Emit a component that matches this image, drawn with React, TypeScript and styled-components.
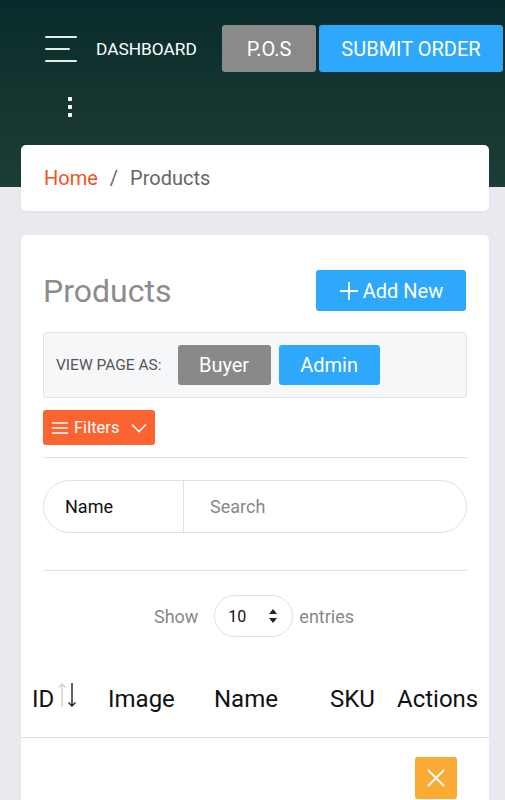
import React from "react";
import styled, { createGlobalStyle } from "styled-components";

const Global = createGlobalStyle`
  html, body { margin: 0; padding: 0; }
  body {
    font-family: Roboto, "Liberation Sans", Arial, sans-serif;
    background: #e9e9ef;
  }
  * { box-sizing: border-box; }
`;

const Page = styled.div`
  min-height: 800px;
  padding: 25px 0 40px;
  background:
    linear-gradient(180deg, #072b2c 0%, #183730 65%, #1c3e38 100%) top / 100% 187px no-repeat,
    #e9e9ef;
`;

const NavBar = styled.div`
  display: flex;
  align-items: center;
  height: 47px;
  padding: 0 2px 0 45px;
`;

const Burger = styled.button`
  display: flex;
  flex-direction: column;
  gap: 10px;
  width: 32px;
  padding: 0;
  border: 0;
  background: none;
  margin-right: 19px;
`;

const BurgerLine = styled.span<{ $w: number }>`
  display: block;
  height: 2px;
  width: ${(p) => p.$w}px;
  background: #e6ece9;
  border-radius: 1px;
`;

const Brand = styled.span`
  color: #fff;
  font-size: 17.3px;
`;

const NavButton = styled.button<{ $tone: "gray" | "blue"; $w: number }>`
  height: 47px;
  width: ${(p) => p.$w}px;
  border: 0;
  border-radius: 3px;
  color: #fff;
  font-family: inherit;
  font-size: 20px;
  background: ${(p) => (p.$tone === "gray" ? "#8a8a8a" : "#2ea8fb")};
`;

const NavButtons = styled.div`
  display: flex;
  gap: 3px;
  margin-left: auto;
`;

const DotsRow = styled.div`
  display: flex;
  padding: 24px 0 0 66px;
  height: 48px;
`;

const Content = styled.div`
  display: flex;
  flex-direction: column;
  gap: 24px;
  margin-top: 25px;
  padding: 0 16px 0 21px;
`;

const Card = styled.div`
  background: #fff;
  border-radius: 5px;
  box-shadow: 0 1px 3px rgba(0, 0, 0, 0.04);
`;

const Crumbs = styled(Card)`
  display: flex;
  align-items: center;
  gap: 12px;
  height: 66px;
  padding: 0 23px;
  font-size: 20px;
`;

const CrumbLink = styled.span`
  color: #f4511e;
`;

const CrumbSep = styled.span`
  color: #666;
`;

const CrumbCurrent = styled.span`
  color: #666;
`;

const MainCard = styled(Card)`
  padding: 35px 0 0;
  min-height: 600px;
`;

const Inner = styled.div`
  padding: 0 22px;
  display: flex;
  flex-direction: column;
`;

const TitleRow = styled.div`
  display: flex;
  align-items: center;
  justify-content: space-between;
  height: 41px;
`;

const Title = styled.h1`
  margin: 0;
  font-size: 32px;
  font-weight: 400;
  color: #8c8c8c;
`;

const AddButton = styled.button`
  display: flex;
  align-items: center;
  justify-content: center;
  gap: 4px;
  width: 150px;
  height: 41px;
  border: 0;
  border-radius: 3px;
  background: #2ea8fb;
  color: #fff;
  font-family: inherit;
  font-size: 20px;
  margin-right: 1px;
`;

const ViewBox = styled.div`
  display: flex;
  align-items: center;
  gap: 8px;
  height: 66px;
  margin-top: 21px;
  padding: 0 12px;
  background: #f6f7f9;
  border: 1px solid #e1e2e4;
  border-radius: 4px;
`;

const ViewLabel = styled.span`
  font-size: 15.5px;
  color: #555;
  margin-right: 8px;
`;

const ViewButton = styled.button<{ $tone: "gray" | "blue"; $w: number }>`
  width: ${(p) => p.$w}px;
  height: 40px;
  border: 0;
  border-radius: 3px;
  color: #fff;
  font-family: inherit;
  font-size: 20px;
  background: ${(p) => (p.$tone === "gray" ? "#898989" : "#2ea8fb")};
`;

const FilterButton = styled.button`
  display: flex;
  align-items: center;
  align-self: flex-start;
  gap: 6px;
  width: 112px;
  height: 35px;
  margin-top: 12px;
  padding: 0 8px 0 9px;
  border: 0;
  border-radius: 3px;
  background: #fb6430;
  color: #fff;
  font-family: inherit;
  font-size: 16.5px;
`;

const FilterText = styled.span`
  flex: 1;
  text-align: left;
`;

const Rule = styled.hr<{ $top: number }>`
  margin: ${(p) => p.$top}px 0 0;
  border: 0;
  border-top: 1.5px solid #e2e2e2;
`;

const SearchPill = styled.div`
  display: flex;
  align-items: stretch;
  height: 53px;
  margin-top: 22px;
  border: 1.5px solid #e1e1e1;
  border-radius: 27px;
`;

const SearchField = styled.div`
  display: flex;
  align-items: center;
  width: 140px;
  padding-left: 21px;
  border-right: 1.5px solid #e1e1e1;
  font-size: 18px;
  color: #111;
`;

const SearchInput = styled.div`
  display: flex;
  align-items: center;
  padding-left: 26px;
  font-size: 18px;
  color: #888;
`;

const ShowRow = styled.div`
  display: flex;
  align-items: center;
  justify-content: center;
  gap: 6px;
  margin-top: 24px;
  font-size: 18px;
  color: #888;
  padding-right: 2px;
`;

const SelectPill = styled.div`
  display: flex;
  align-items: center;
  justify-content: space-between;
  width: 79px;
  height: 42px;
  margin: 0 0 0 10px;
  padding: 0 14px 0 13px;
  border: 1.5px solid #e1e1e1;
  border-radius: 21px;
  color: #111;
  font-size: 16px;
`;

const Table = styled.div`
  margin-top: 24px;
`;

const TableRow = styled.div<{ $h: number; $border?: boolean }>`
  display: grid;
  grid-template-columns: 76px 106px 116px 67px 1fr;
  align-items: center;
  height: ${(p) => p.$h}px;
  border-bottom: ${(p) => (p.$border ? "1.5px solid #dedede" : "0")};
`;

const HeadCell = styled.div`
  display: flex;
  align-items: center;
  padding-left: 11px;
  font-size: 24px;
  color: #111;
  white-space: nowrap;
`;

const BodyCell = styled.div<{ $center?: boolean }>`
  display: flex;
  justify-content: ${(p) => (p.$center ? "center" : "flex-start")};
  padding-left: 11px;
  padding-right: ${(p) => (p.$center ? "14px" : "0")};
`;

const DeleteButton = styled.button`
  display: flex;
  align-items: center;
  justify-content: center;
  width: 42px;
  height: 42px;
  border: 0;
  border-radius: 3px;
  background: #fbab33;
  padding: 0;
`;

const Dots = () => (
  <svg width="8" height="22" viewBox="0 0 8 22">
    <rect x="2" y="1" width="4" height="4" rx="0.8" fill="#fff" />
    <rect x="2" y="9" width="4" height="4" rx="0.8" fill="#fff" />
    <rect x="2" y="17" width="4" height="4" rx="0.8" fill="#fff" />
  </svg>
);

const Plus = () => (
  <svg width="20" height="20" viewBox="0 0 20 20">
    <path d="M10 1v18M1 10h18" stroke="#fff" strokeWidth="1.8" />
  </svg>
);

const MenuIcon = () => (
  <svg width="16" height="14" viewBox="0 0 16 14">
    <path d="M0 2h16M0 7h16M0 12h16" stroke="#fff" strokeWidth="1.5" />
  </svg>
);

const Chevron = () => (
  <svg width="16" height="10" viewBox="0 0 16 10">
    <path d="M1 1.5l7 7 7-7" stroke="#fff" strokeWidth="1.6" fill="none" />
  </svg>
);

const UpDown = () => (
  <svg width="10" height="16" viewBox="0 0 10 16">
    <path d="M5 1L1 6h8z" fill="#222" />
    <path d="M5 15L1 10h8z" fill="#222" />
  </svg>
);

const SortArrows = () => (
  <svg width="22" height="26" viewBox="0 0 22 26" style={{ marginLeft: 3, marginTop: -8 }}>
    <path d="M5 25V2M1.5 5.5L5 2l3.5 3.5" stroke="#cfcfcf" strokeWidth="1.4" fill="none" />
    <path d="M15 1v23M11.5 20.5L15 24l3.5-3.5" stroke="#222" strokeWidth="1.4" fill="none" />
  </svg>
);

const Cross = () => (
  <svg width="20" height="20" viewBox="0 0 20 20">
    <path d="M2 2l16 16M18 2L2 18" stroke="#fff" strokeWidth="1.8" />
  </svg>
);

export default function App() {
  return (
    <Page>
      <Global />
      <NavBar>
        <Burger aria-label="menu">
          <BurgerLine $w={32} />
          <BurgerLine $w={25} />
          <BurgerLine $w={32} />
        </Burger>
        <Brand>DASHBOARD</Brand>
        <NavButtons>
          <NavButton $tone="gray" $w={94}>P.O.S</NavButton>
          <NavButton $tone="blue" $w={184}>SUBMIT ORDER</NavButton>
        </NavButtons>
      </NavBar>
      <DotsRow>
        <Dots />
      </DotsRow>
      <Content>
        <Crumbs>
          <CrumbLink>Home</CrumbLink>
          <CrumbSep>/</CrumbSep>
          <CrumbCurrent>Products</CrumbCurrent>
        </Crumbs>
        <MainCard>
          <Inner>
            <TitleRow>
              <Title>Products</Title>
              <AddButton>
                <Plus />
                Add New
              </AddButton>
            </TitleRow>
            <ViewBox>
              <ViewLabel>VIEW PAGE AS:</ViewLabel>
              <ViewButton $tone="gray" $w={93}>Buyer</ViewButton>
              <ViewButton $tone="blue" $w={101}>Admin</ViewButton>
            </ViewBox>
            <FilterButton>
              <MenuIcon />
              <FilterText>Filters</FilterText>
              <Chevron />
            </FilterButton>
            <Rule $top={12} />
            <SearchPill>
              <SearchField>Name</SearchField>
              <SearchInput>Search</SearchInput>
            </SearchPill>
            <Rule $top={37} />
            <ShowRow>
              <span>Show</span>
              <SelectPill>
                <span>10</span>
                <UpDown />
              </SelectPill>
              <span>entries</span>
            </ShowRow>
          </Inner>
          <Table>
            <TableRow $h={77} $border>
              <HeadCell>
                ID
                <SortArrows />
              </HeadCell>
              <HeadCell>Image</HeadCell>
              <HeadCell>Name</HeadCell>
              <HeadCell>SKU</HeadCell>
              <HeadCell>Actions</HeadCell>
            </TableRow>
            <TableRow $h={80}>
              <BodyCell />
              <BodyCell />
              <BodyCell />
              <BodyCell />
              <BodyCell $center>
                <DeleteButton aria-label="delete">
                  <Cross />
                </DeleteButton>
              </BodyCell>
            </TableRow>
          </Table>
        </MainCard>
      </Content>
    </Page>
  );
}
